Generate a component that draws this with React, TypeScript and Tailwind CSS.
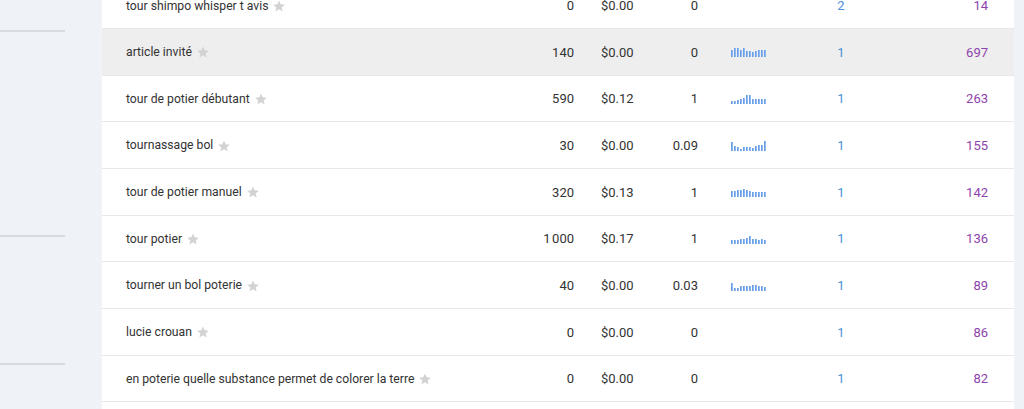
import React from "react";

type Row = {
  kw: string;
  vol: string;
  cpc: string;
  comp: string;
  trend?: number[];
  links: string;
  score: string;
  hl?: boolean;
};

const rows: Row[] = [
  { kw: "tour shimpo whisper t avis", vol: "0", cpc: "$0.00", comp: "0", links: "2", score: "14" },
  { kw: "article invité", vol: "140", cpc: "$0.00", comp: "0", trend: [7, 9, 9, 7, 9, 6, 6, 5, 6, 7, 7, 7], links: "1", score: "697", hl: true },
  { kw: "tour de potier débutant", vol: "590", cpc: "$0.12", comp: "1", trend: [3, 3, 4, 5, 6, 9, 9, 5, 5, 5, 5, 5], links: "1", score: "263" },
  { kw: "tournassage bol", vol: "30", cpc: "$0.00", comp: "0.09", trend: [9, 5, 4, 2, 4, 4, 4, 3, 5, 6, 6, 10], links: "1", score: "155" },
  { kw: "tour de potier manuel", vol: "320", cpc: "$0.13", comp: "1", trend: [6, 6, 7, 7, 8, 7, 6, 5, 5, 5, 5, 5], links: "1", score: "142" },
  { kw: "tour potier", vol: "1\u202F000", cpc: "$0.17", comp: "1", trend: [4, 4, 4, 5, 5, 6, 8, 5, 5, 4, 5, 4], links: "1", score: "136" },
  { kw: "tourner un bol poterie", vol: "40", cpc: "$0.00", comp: "0.03", trend: [8, 3, 3, 5, 5, 5, 5, 6, 6, 5, 5, 4], links: "1", score: "89" },
  { kw: "lucie crouan", vol: "0", cpc: "$0.00", comp: "0", links: "1", score: "86" },
  { kw: "en poterie quelle substance permet de colorer la terre", vol: "0", cpc: "$0.00", comp: "0", links: "1", score: "82" },
  { kw: "", vol: "", cpc: "", comp: "", links: "", score: "" },
];

function Star() {
  return (
    <svg width="14" height="14" viewBox="0 0 24 24" className="ml-[4px] shrink-0">
      <path
        d="M12 2.5l2.9 6.6 7.1.6-5.4 4.7 1.6 7-6.2-3.7-6.2 3.7 1.6-7L2 9.7l7.1-.6z"
        fill="#d3d3d3"
      />
    </svg>
  );
}

function Trend({ data }: { data: number[] }) {
  return (
    <div className="flex items-end gap-[1px] h-[10px]">
      {data.map((h, i) => (
        <div
          key={i}
          className="w-[2px] bg-[#8fb8f0] border-l border-[#6a9fe8]"
          style={{ height: `${h}px` }}
        />
      ))}
    </div>
  );
}

export default function App() {
  return (
    <div
      className="w-[1024px] h-[409px] overflow-hidden flex bg-[#eff2f7]"
      style={{ fontFamily: "Roboto, 'Liberation Sans', sans-serif" }}
    >
      <aside className="w-[102px] shrink-0 flex flex-col">
        <div className="h-[30px]" />
        <div className="w-[65px] h-[2px] bg-[#d9dbe0]" />
        <div className="h-[203px]" />
        <div className="w-[65px] h-[2px] bg-[#d9dbe0]" />
        <div className="h-[126px]" />
        <div className="w-[65px] h-[2px] bg-[#d9dbe0]" />
      </aside>
      <main className="w-[912px] shrink-0 bg-white">
        <div className="-mt-[17.67px]">
          {rows.map((r, i) => (
            <div
              key={i}
              className={`h-[46.67px] border-b border-[#e8e8e8] grid grid-cols-[24px_388px_60px_86px_38px_102px_82px_106px] items-center text-[13px] text-[#333] ${
                r.hl ? "bg-[#eeeeee]" : ""
              }`}
            >
              <div />
              <div className="flex items-center pt-[1px] text-[12.2px]">
                {r.kw && (
                  <>
                    <span>{r.kw}</span>
                    <Star />
                  </>
                )}
              </div>
              <div className="text-right pt-[1px]">{r.vol}</div>
              <div className="pl-[27px] pt-[1px]">{r.cpc}</div>
              <div className="text-right pt-[1px]">{r.comp}</div>
              <div className="pl-[33px] pt-[1px]">{r.trend && <Trend data={r.trend} />}</div>
              <div className="text-center text-[#4a90d9] pt-[1px]">{r.links}</div>
              <div className="text-right text-[#8e44ad] pt-[1px]">{r.score}</div>
            </div>
          ))}
        </div>
      </main>
    </div>
  );
}
